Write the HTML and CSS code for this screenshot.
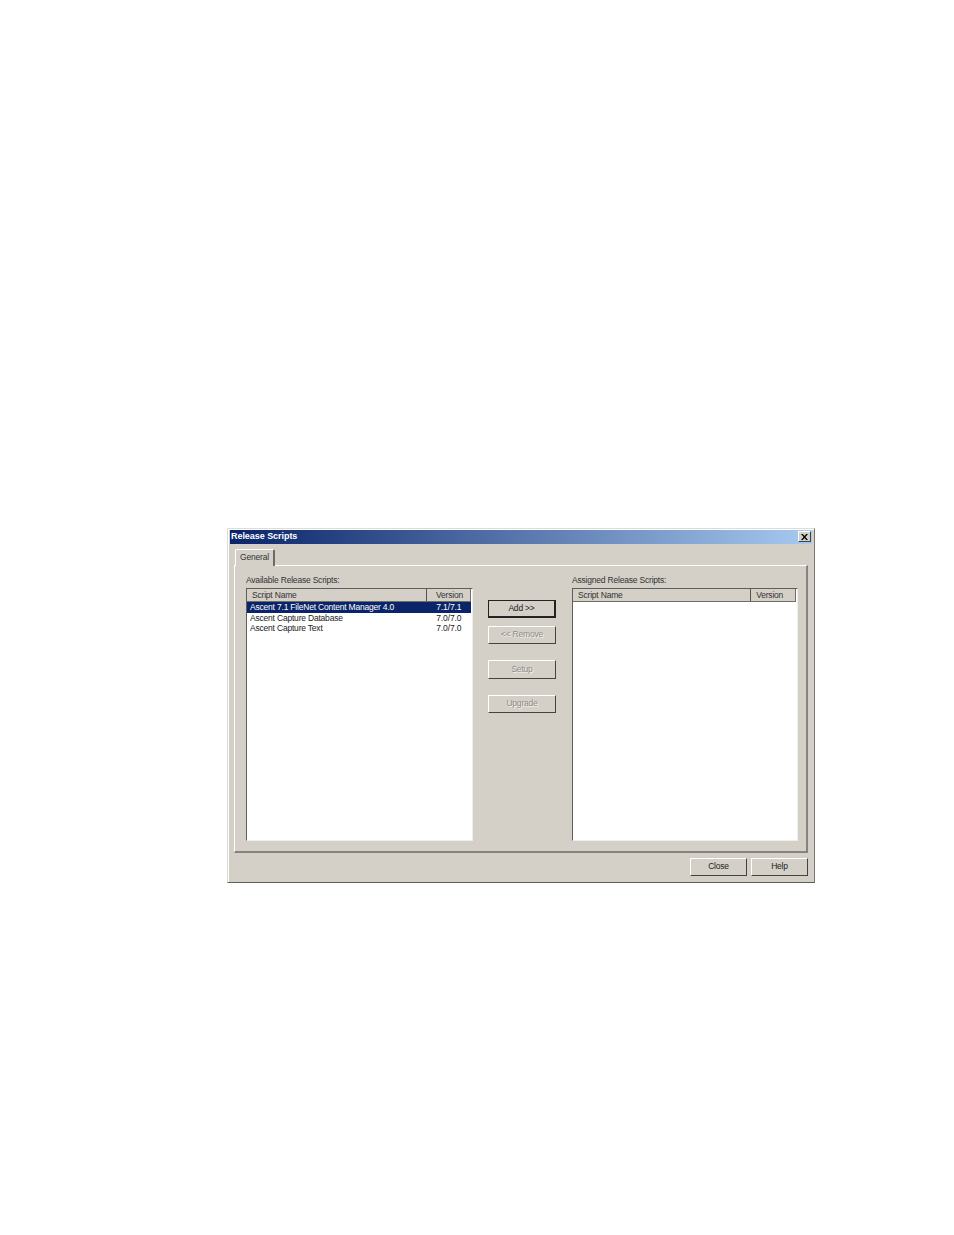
FILE: index.html
```html
<!DOCTYPE html>
<html lang="en">
<head>
<meta charset="utf-8">
<title>Release Scripts</title>
<link rel="stylesheet" href="styles.css">
</head>
<body>
<div class="dialog">
  <div class="titlebar">
    <span class="title">Release Scripts</span>
    <span class="close-box"><svg width="7" height="6" viewBox="0 0 7 6"><path d="M0 0h1.800L3.500 2 5.200 0H7L4.400 3 7 6H5.200L3.500 4 1.800 6H0l2.600-3z" fill="#000"/></svg></span>
  </div>
  <div class="tabs"><div class="tab">General</div></div>
  <div class="panel">
    <section class="group">
      <div class="label">Available Release Scripts:</div>
      <div class="list">
        <div class="head"><span class="h-name">Script Name</span><span class="h-ver">Version</span></div>
        <div class="row selected"><span class="c-name">Ascent 7.1 FileNet Content Manager 4.0</span><span class="c-ver">7.1/7.1</span></div>
        <div class="row"><span class="c-name">Ascent Capture Database</span><span class="c-ver">7.0/7.0</span></div>
        <div class="row"><span class="c-name">Ascent Capture Text</span><span class="c-ver">7.0/7.0</span></div>
      </div>
    </section>
    <div class="actions">
      <button class="btn default">Add &gt;&gt;</button>
      <button class="btn off remove">&lt;&lt; Remove</button>
      <button class="btn off setup">Setup</button>
      <button class="btn off upgrade">Upgrade</button>
    </div>
    <section class="group assigned">
      <div class="label">Assigned Release Scripts:</div>
      <div class="list">
        <div class="head"><span class="h-name">Script Name</span><span class="h-ver">Version</span></div>
      </div>
    </section>
  </div>
  <div class="footer">
    <button class="btn foot">Close</button>
    <button class="btn foot">Help</button>
  </div>
</div>
</body>
</html>
```
FILE: styles.css
```css
html, body { margin: 0; padding: 0; background: #fff; }
body { height: 1235px; overflow: hidden; padding-top: 528px; box-sizing: border-box; font-family: "Liberation Sans", Arial, sans-serif; font-size: 8.500px; letter-spacing: -0.2px; color: #222; }
.dialog { margin-left: 227px; width: 588px; height: 355px; box-sizing: border-box; background: #d4d0c8; border: 1px solid; border-color: #dedcd6 #77756f #605e5a #dedcd6; box-shadow: inset 1px 1px 0 #fff; padding: 1px 2px 0 2px; display: flex; flex-direction: column; }
.titlebar { height: 14px; flex: none; background: linear-gradient(90deg, #0a246a, #a6caf0); display: flex; align-items: flex-start; justify-content: space-between; padding: 0 1px; }
.title { color: #fff; font-weight: bold; font-size: 9px; letter-spacing: -0.05px; line-height: 12px; }
.close-box { width: 11px; height: 9px; margin-top: 1px; background: #d4d0c8; border: 1px solid; border-color: #fff #404040 #404040 #fff; display: flex; align-items: center; justify-content: center; }
.tabs { height: 21px; flex: none; display: flex; align-items: flex-end; padding-left: 5px; }
.tab { width: 40px; height: 17px; box-sizing: border-box; border: 1px solid; border-bottom: 0; border-color: #fff #6d6b66 #d4d0c8 #fff; border-right-width: 2px; border-radius: 2px 2px 0 0; text-align: center; line-height: 15px; position: relative; top: 1px; background: #d4d0c8; z-index: 1; color: #333; }
.panel { margin-left: 4px; width: 574px; height: 288px; flex: none; box-sizing: border-box; border: solid; border-color: #fff #85837e #85837e #fff; border-width: 1px 2px 2px 1px; padding: 9px 9px 10px 11px; display: grid; grid-template-columns: 227px 99px 226px; }
.group { display: flex; flex-direction: column; }
.label { height: 13px; line-height: 11px; color: #333; }
.list { flex: 1; background: #fff; border: 1px solid; border-color: #5f5d58 #eee #eee #5f5d58; padding-right: 1px; }
.head { display: flex; height: 13px; background: #d4d0c8; border-bottom: 1px solid #6f6d68; box-sizing: border-box; line-height: 12px; color: #333; }
.h-name { width: 180px; padding-left: 5px; box-sizing: border-box; border-right: 1px solid #55534f; }
.h-ver { width: 44px; box-sizing: border-box; padding-left: 9px; border-right: 1px solid #6f6d68; }
.assigned .h-name { width: 179px; }
.assigned .h-ver { width: 45px; padding-left: 5px; }
.row { display: flex; height: 10.400px; line-height: 10.400px; }
.row.selected { background: #0a246a; color: #fff; height: 11px; }
.c-name { width: 189px; padding-left: 3px; box-sizing: border-box; white-space: nowrap; }
.c-ver { width: 35px; padding-left: 1px; letter-spacing: -0.1px; }
.actions { display: flex; flex-direction: column; align-items: flex-start; padding: 25px 0 0 15px; }
.btn { font: inherit; letter-spacing: inherit; padding: 0 0 2px; margin: 0; background: #d4d0c8; color: #222; width: 68px; height: 18px; border: 1px solid; border-color: #fff #45433f #45433f #fff; box-sizing: border-box; }
.btn.default { border: 1px solid #222; border-bottom-width: 2px; border-right-width: 2px; }
.btn.off { color: #8f8d88; text-shadow: 1px 1px 0 #f2f1ee; }
.remove { margin-top: 8px; }
.setup { margin-top: 16px; height: 19px; }
.upgrade { margin-top: 16px; }
.footer { display: flex; justify-content: flex-end; gap: 4px; padding: 5px 4px 0 0; }
.btn.foot { width: 57px; height: 18px; }
```
